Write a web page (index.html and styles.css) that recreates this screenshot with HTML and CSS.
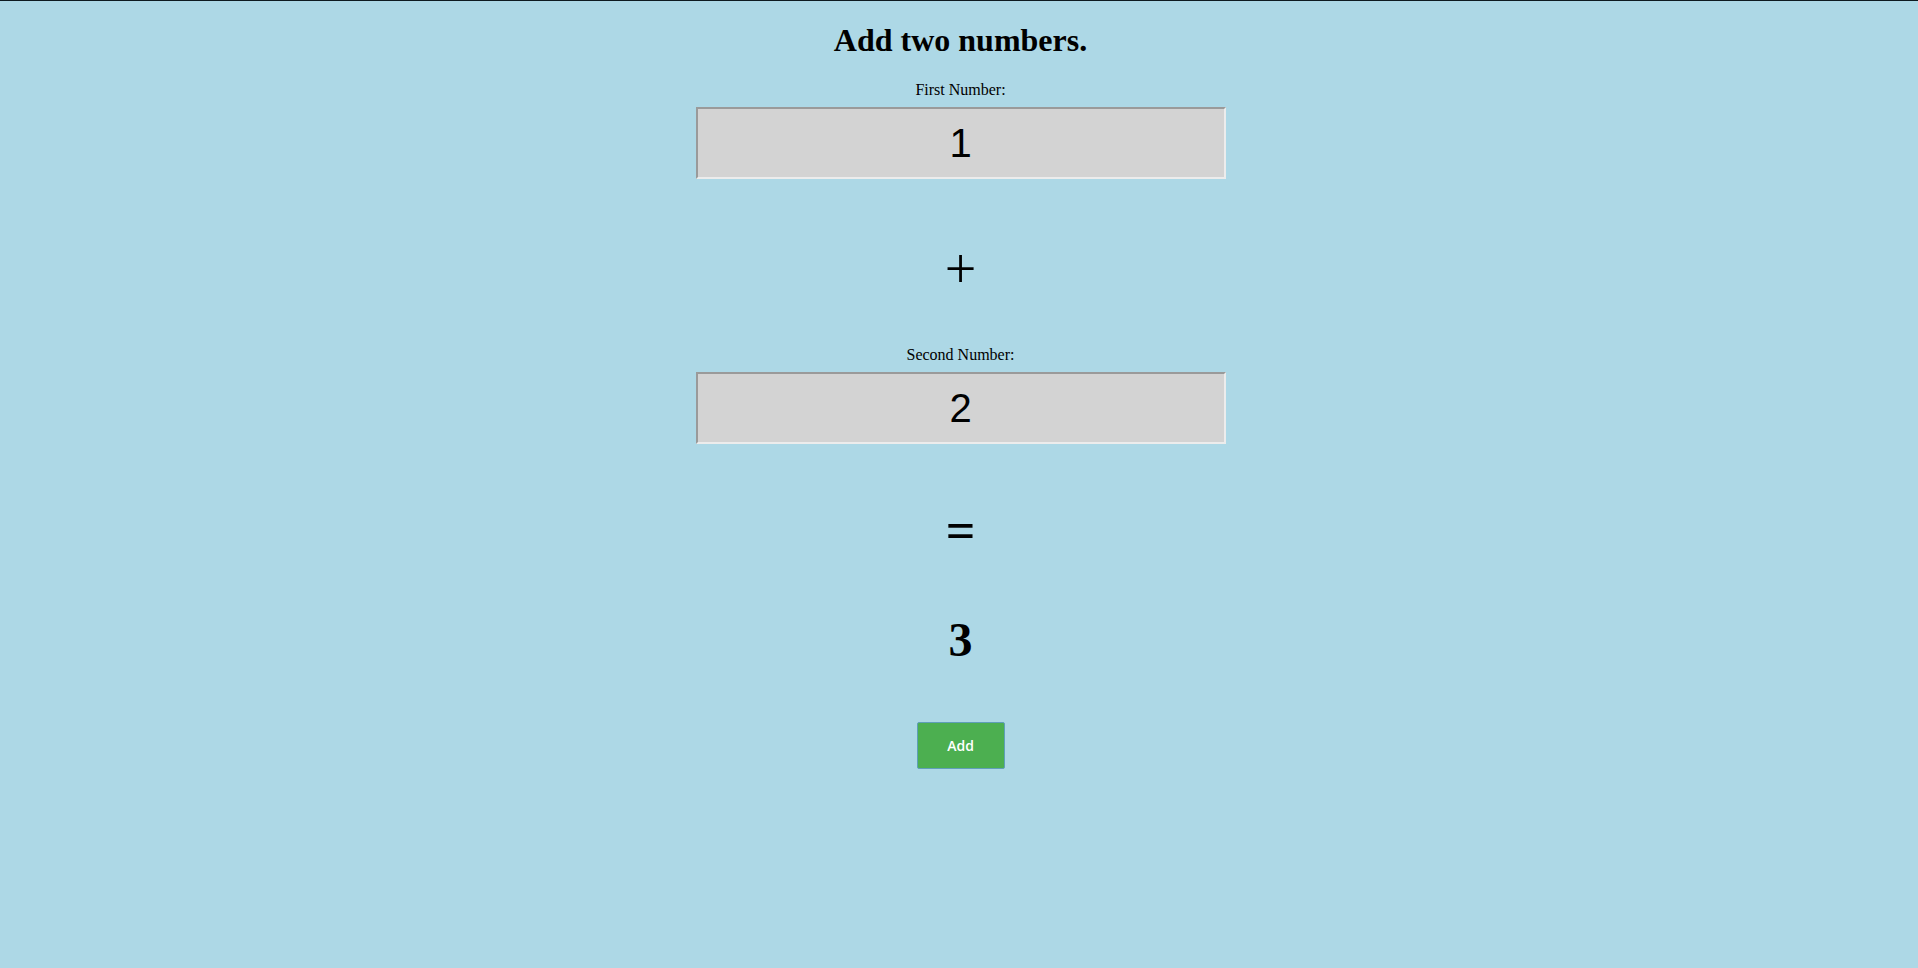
FILE: index.html
```html
<!DOCTYPE html>
<html lang="en">
<head>
<meta charset="utf-8">
<title>Add two numbers</title>
<link rel="stylesheet" href="styles.css">
</head>
<body>
<main class="calc">
  <h1 class="title">Add two numbers.</h1>
  <label class="label label-first" for="n1">First Number:</label>
  <input class="num" id="n1" type="text" value="1">
  <div class="op op-plus">+</div>
  <label class="label label-second" for="n2">Second Number:</label>
  <input class="num" id="n2" type="text" value="2">
  <div class="op op-eq">=</div>
  <div class="result">3</div>
  <button class="add-btn" type="button">Add</button>
</main>
</body>
</html>
```

FILE: styles.css
```css
html {
  border-top: 1px solid #0d1a20;
  background: #add8e6;
}
body {
  margin: 0;
  background: #add8e6;
  color: #000;
  font-family: "Liberation Serif", "Times New Roman", serif;
}
.calc {
  display: flex;
  flex-direction: column;
  align-items: center;
  padding-top: 21px;
  padding-left: 3px;
}
.title {
  margin: 0;
  font-size: 32px;
  line-height: 36px;
  font-weight: bold;
}
.label {
  display: block;
  font-size: 16px;
  line-height: 18px;
}
.label-first { margin-top: 23px; }
.label-second { margin-top: 49px; }
.num {
  box-sizing: border-box;
  width: 530px;
  height: 72px;
  margin: 8px 0 0 0;
  padding: 0 4px;
  background: #d3d3d3;
  border-style: solid;
  border-width: 2px;
  border-color: #9a9a9a #ececec #ececec #9a9a9a;
  font-family: "Liberation Sans", Arial, sans-serif;
  font-size: 40px;
  color: #000;
  text-align: center;
  outline: none;
}
.op {
  font-family: "Liberation Serif", "Times New Roman", serif;
  line-height: 56px;
  height: 56px;
}
.op-plus {
  font-size: 56px;
  margin-top: 62px;
}
.op-eq {
  font-size: 52px;
  font-weight: bold;
  margin-top: 59px;
}
.result {
  font-size: 48px;
  font-weight: bold;
  line-height: 48px;
  margin-top: 57px;
}
.add-btn {
  margin-top: 58px;
  width: 88px;
  height: 47px;
  background: #4caf50;
  border: 1px solid #5f9fb8;
  border-radius: 2px;
  color: #fff;
  font-family: "Open Sans", "Segoe UI", sans-serif;
  font-size: 14px;
  font-weight: 600;
  padding: 0;
  cursor: pointer;
}
```
